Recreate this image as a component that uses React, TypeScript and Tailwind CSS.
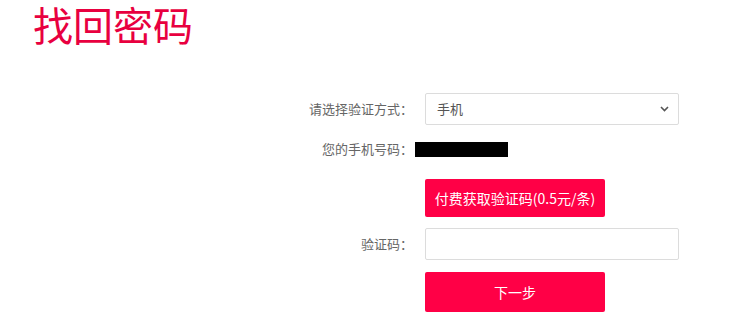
import { useState } from "react"

const font = { fontFamily: '"Microsoft YaHei", "Noto Sans CJK SC", "Noto Sans", sans-serif' }

function Label({ children }: { children: string }) {
  return <div className="w-[413px] shrink-0 text-right text-[13px] text-[#666]">{children}</div>
}

export default function App() {
  const [method, setMethod] = useState("phone")
  const [code, setCode] = useState("")

  return (
    <div className="min-h-screen bg-white" style={font}>
      <h1 className="pl-[33px] text-[40px] leading-[48px] font-normal text-[#e8003f]">找回密码</h1>

      <div className="mt-[45px] flex flex-col">
        <div className="flex h-8 items-center">
          <Label>请选择验证方式：</Label>
          <div className="relative ml-3 h-8 w-[254px]">
            <select
              value={method}
              onChange={(e) => setMethod(e.target.value)}
              className="h-8 w-full appearance-none rounded-[2px] border border-[#dcdcdc] bg-white pl-[11px] text-[13px] text-[#555] outline-none"
            >
              <option value="phone">手机</option>
              <option value="email">邮箱</option>
            </select>
            <svg className="pointer-events-none absolute right-[10px] top-[13px]" width="9" height="6" viewBox="0 0 9 6">
              <path d="M1 1l3.5 3.5L8 1" fill="none" stroke="#555" strokeWidth="1.6" />
            </svg>
          </div>
        </div>

        <div className="mt-[14px] flex h-5 items-center">
          <Label>您的手机号码：</Label>
          <div className="ml-[2px] h-[15px] w-[93px] bg-black" />
        </div>

        <div className="mt-[20px] flex">
          <div className="w-[413px] shrink-0" />
          <button className="ml-3 h-[38px] w-[180px] rounded-[2px] bg-[#ff0046] text-[14px] text-white">
            付费获取验证码(0.5元/条)
          </button>
        </div>

        <div className="mt-[11px] flex h-8 items-center">
          <Label>验证码：</Label>
          <input
            value={code}
            onChange={(e) => setCode(e.target.value)}
            className="ml-3 h-8 w-[254px] rounded-[2px] border border-[#dcdcdc] px-2 text-[13px] outline-none"
          />
        </div>

        <div className="mt-3 flex">
          <div className="w-[413px] shrink-0" />
          <button className="ml-3 h-[40px] w-[180px] rounded-[2px] bg-[#ff0046] text-[14px] text-white">下一步</button>
        </div>
      </div>
    </div>
  )
}
